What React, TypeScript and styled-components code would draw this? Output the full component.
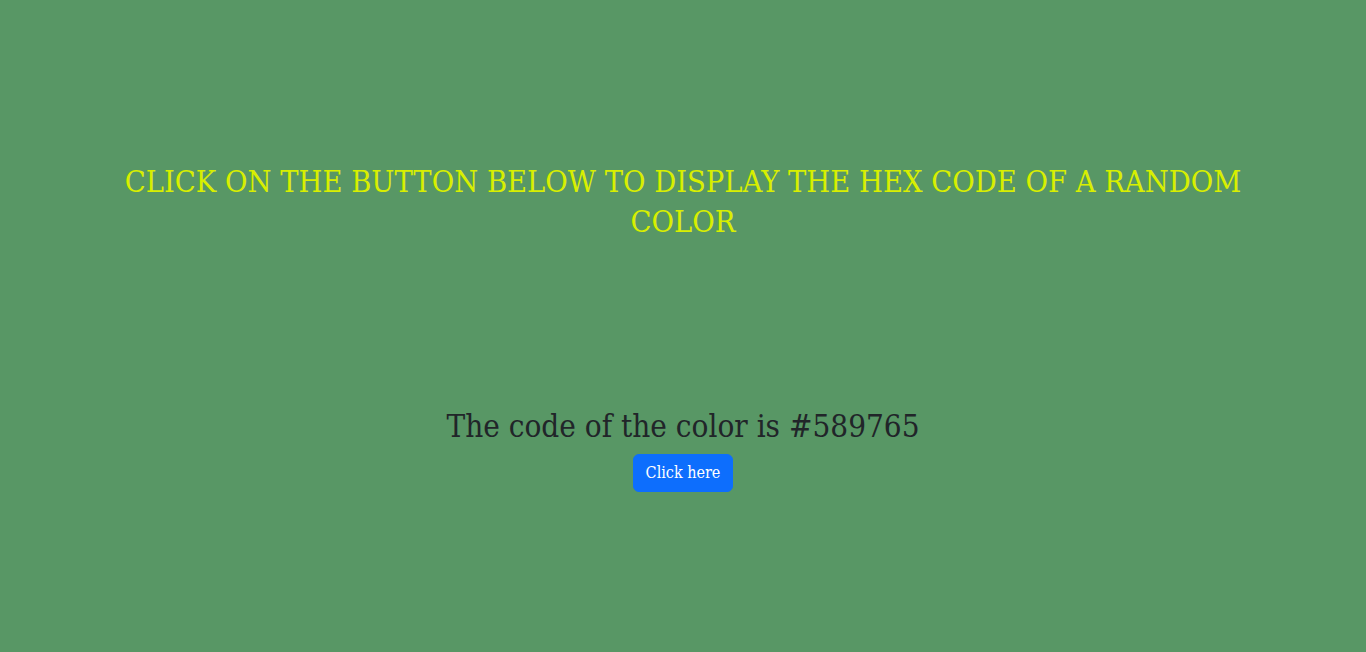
import React from "react";
import styled, { createGlobalStyle } from "styled-components";

const Global = createGlobalStyle`
  html, body { margin: 0; padding: 0; }
  body {
    background: #589765;
    font-family: "DejaVu Serif", "Liberation Serif", serif;
    color: #212529;
  }
`;

const Page = styled.div`
  min-height: 652px;
  display: flex;
  flex-direction: column;
  align-items: center;
  padding-top: 162px;
  box-sizing: border-box;
`;

const Heading = styled.h2`
  margin: 0;
  width: 1140px;
  text-align: center;
  color: #d8ef00;
  font-family: "DejaVu Serif Condensed", "DejaVu Serif", serif;
  font-stretch: condensed;
  font-size: 30.5px;
  font-weight: 400;
  line-height: 40px;
`;

const Result = styled.section`
  margin-top: 164px;
  display: flex;
  flex-direction: column;
  align-items: center;
  gap: 8px;
`;

const Code = styled.p`
  margin: 0;
  font-family: "DejaVu Serif Condensed", "DejaVu Serif", serif;
  font-stretch: condensed;
  font-size: 31.2px;
  line-height: 40px;
  color: #212529;
`;

const Button = styled.button`
  display: flex;
  align-items: center;
  justify-content: center;
  box-sizing: border-box;
  background: #0d6efd;
  color: #fff;
  border: 1px solid #0d6efd;
  border-radius: 6px;
  padding: 0;
  white-space: nowrap;
  font-family: "DejaVu Serif Condensed", "DejaVu Serif", serif;
  font-stretch: condensed;
  font-size: 16px;
  line-height: 24px;
  width: 100px;
  height: 38px;
  cursor: pointer;
`;

export default function App() {
  return (
    <>
      <Global />
      <Page>
        <Heading>CLICK ON THE BUTTON BELOW TO DISPLAY THE HEX CODE OF A RANDOM COLOR</Heading>
        <Result>
          <Code>The code of the color is #589765</Code>
          <Button>Click here</Button>
        </Result>
      </Page>
    </>
  );
}
